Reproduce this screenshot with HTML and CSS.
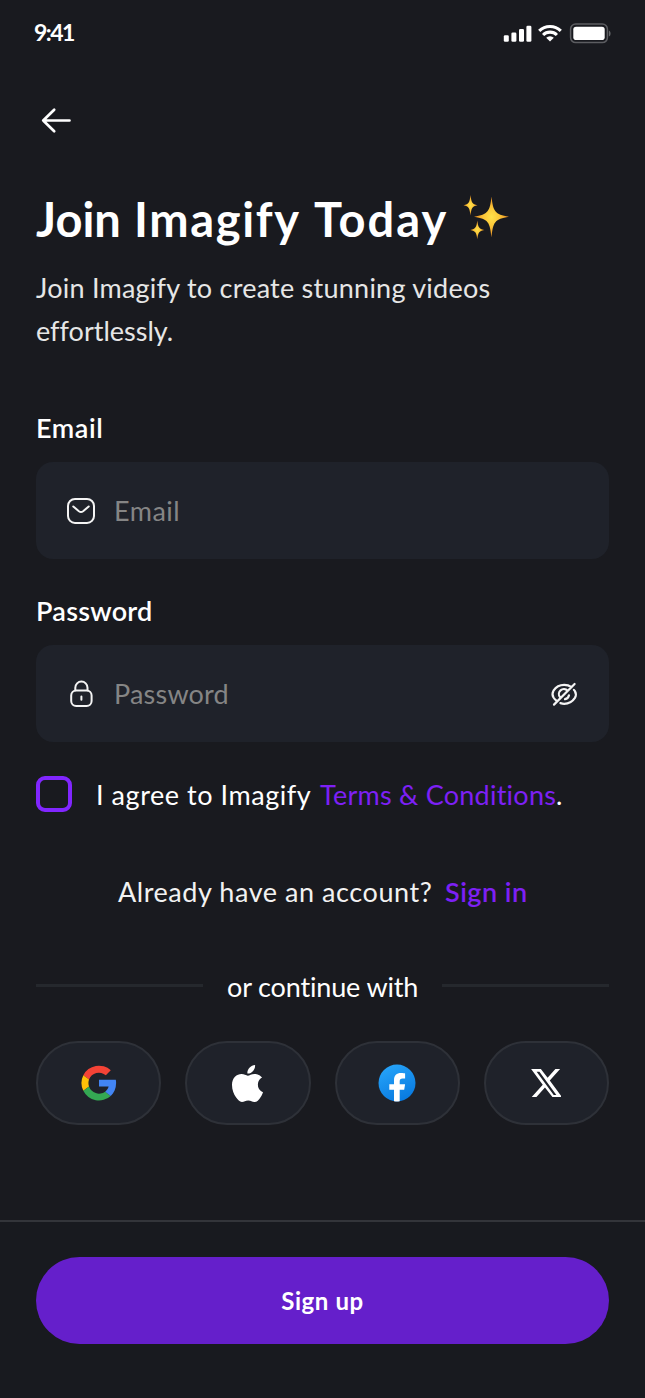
FILE: index.html
```html
<!DOCTYPE html>
<html lang="en">
<head>
<meta charset="utf-8">
<meta name="viewport" content="width=device-width, initial-scale=1">
<title>Join Imagify Today</title>
<link rel="stylesheet" href="styles.css">
</head>
<body>
<div class="screen">
  <header class="status">
    <span class="time">9:41</span>
    <svg class="status-icons" width="108" height="22" viewBox="0 0 108 22" fill="none">
      <g fill="#fff">
        <rect x="0.8" y="13.300" width="5" height="6.500" rx="1.3"/>
        <rect x="8.4" y="10.400" width="5" height="9.400" rx="1.3"/>
        <rect x="16" y="7" width="5" height="12.800" rx="1.3"/>
        <rect x="23.4" y="3.800" width="5" height="16" rx="1.3"/>
      </g>
      <g stroke="#fff" stroke-width="3.1">
        <path d="M36.2 8.9a15.5 15.5 0 0 1 21.600 0"/>
        <path d="M40.1 13a9.8 9.8 0 0 1 13.800 0"/>
      </g>
      <path d="M47 19.600l-3.8-3.9a5.5 5.500 0 0 1 7.600 0z" fill="#fff"/>
      <rect x="67.6" y="2" width="36.800" height="18.600" rx="5" stroke="#5c5d61" stroke-width="1.500"/>
      <rect x="70.3" y="4.700" width="31.400" height="13.300" rx="2.800" fill="#fff"/>
      <path d="M105.9 8.400v6.200c2.200-.9 2.200-5.300 0-6.200z" fill="#66676b"/>
    </svg>
  </header>

  <main class="content">
    <button class="back" aria-label="Back">
      <svg width="32" height="28" viewBox="0 0 32 28" fill="none" stroke="#fff" stroke-width="2.7" stroke-linecap="round" stroke-linejoin="round"><path d="M29.500 14.500H3.200M14.200 3.800L3.200 14.500l11 10.700"/></svg>
    </button>

    <h1 class="title"><span class="title-join">Join </span><span class="title-brand">Imagify </span><span class="title-today">Today</span>
      <svg class="sparkles" width="48" height="48" viewBox="0 0 48 48">
        <defs><radialGradient id="gold"><stop offset="0" stop-color="#ffe14a"/><stop offset=".45" stop-color="#fbc638"/><stop offset="1" stop-color="#e88a20"/></radialGradient></defs>
        <g fill="url(#gold)">
          <path d="M28.5 1.5C30.1 16 31.7 19.5 46 21.700C31.700 23.900 30.100 27 28.500 42.500C26.900 27 25.300 23.900 11 21.700C25.300 19.500 26.900 16 28.500 1.500z"/>
          <path d="M7.500 0C8.400 7.400 9 9.200 14.500 10.300C9 11.400 8.400 13.200 7.500 20.600C6.600 13.200 6 11.400 .5 10.300C6 9.200 6.600 7.400 7.500 0z"/>
          <path d="M14.300 25.500C15.200 32.200 15.800 33.900 21.300 34.900C15.800 35.900 15.200 37.600 14.300 44.300C13.400 37.600 12.800 35.900 7.300 34.900C12.800 33.900 13.400 32.200 14.300 25.500z"/>
        </g>
      </svg>
    </h1>
    <p class="subtitle"><span class="sub-first">Join Imagify to create stunning videos</span> <span class="sub-last">effortlessly.</span></p>

    <form class="form">
      <label class="label label-email" for="email">Email</label>
      <div class="field">
        <svg class="field-icon" width="30" height="30" viewBox="0 0 30 30" fill="none" stroke="#f4f4f4" stroke-width="2" stroke-linecap="round" stroke-linejoin="round"><rect x="2" y="2.900" width="26" height="24" rx="7"/><path d="M7.300 10.500l5.600 4.700q2.100 1.500 4.200 0l5.600-4.700"/></svg>
        <input class="input input-email" id="email" type="email" placeholder="Email">
      </div>

      <label class="label label-password" for="password">Password</label>
      <div class="field">
        <svg class="field-icon" width="30" height="30" viewBox="0 0 30 30" fill="none" stroke="#f4f4f4" stroke-width="2" stroke-linecap="round"><rect x="5.200" y="11.400" width="20.400" height="15.600" rx="5"/><path d="M9.300 11.200V8.700a6.100 6.100 0 0 1 12.200 0v2.500M15.400 17.400v3.400"/></svg>
        <input class="input input-password" id="password" type="password" placeholder="Password">
        <svg class="eye" width="30" height="30" viewBox="0 0 30 30" fill="none" stroke="#f4f4f4" stroke-width="2.200" stroke-linecap="round" stroke-linejoin="round"><path d="M22.600 8.200C20.400 6.700 17.800 5.900 15.200 5.900 10.700 5.900 6.900 8 4.500 11.700c-1.300 2.200-1.300 4.600 0 6.800.8 1.200 1.600 2.100 2.600 2.900M11.400 24.100c1.200.4 2.500.7 3.800.7 4.500 0 8.300-2.200 10.700-5.900 1.300-2.200 1.300-4.600 0-6.800l-1-1.300M18.600 11.700a4.900 4.900 0 0 0-7.400 6.700M20 16.300a4.900 4.900 0 0 1-4 3.900M25.600 5L5 25.600"/></svg>
      </div>

      <label class="agree"><input class="checkbox" type="checkbox"><span class="agree-line"><span class="agree-text">I agree to Imagify</span><a class="terms">Terms &amp; Conditions</a><span>.</span></span></label>
    </form>

    <p class="signin"><span class="signin-text">Already have an account?</span><a class="signin-link">Sign in</a></p>

    <div class="divider"><span class="divider-text">or continue with</span></div>

    <div class="socials">
      <button class="social" aria-label="Google">
        <svg width="36" height="36" viewBox="0 0 48 48"><path fill="#F44336" d="M3.100 13.700A23.200 23.200 0 0 1 39.700 7.100l-6.600 6.600A14 14 0 0 0 10.700 19.400z"/><path fill="#FFC107" d="M3.100 13.700a23.200 23.200 0 0 0 0 20.600l7.600-5.700a14 14 0 0 1 0-9.200z"/><path fill="#34A853" d="M3.100 34.300a23.200 23.200 0 0 0 36.500 7l-7.400-5.800a14 14 0 0 1-21.500-6.900z"/><path fill="#4285F4" d="M24 19.700v9.100h12.800c-.6 2.700-2.200 5.100-4.600 6.700l7.400 5.800c4.300-4 7.200-10 7.200-17.300 0-1.500-.1-3-.4-4.300z"/></svg>
      </button>
      <button class="social" aria-label="Apple">
        <svg width="31" height="37" viewBox="0 0 814 1000" preserveAspectRatio="none"><path fill="#fff" d="M788.100 340.900c-5.800 4.500-108.200 62.200-108.200 190.500 0 148.400 130.300 200.900 134.200 202.200-.6 3.200-20.700 71.900-68.700 141.900-42.800 61.600-87.500 123.100-155.500 123.100s-85.500-39.500-164-39.500c-76.500 0-103.700 40.800-165.900 40.800s-105.600-57-155.500-127C46.700 790.700 0 663 0 541.800c0-194.400 126.400-297.500 250.800-297.500 66.100 0 121.200 43.400 162.700 43.400 39.500 0 101.100-46 176.300-46 28.500 0 130.900 2.600 198.300 99.200zm-234-181.500c31.100-36.900 53.100-88.100 53.100-139.300 0-7.100-.6-14.300-1.900-20.100-50.600 1.900-110.800 33.700-147.100 75.800-28.500 32.400-55.100 83.600-55.100 135.500 0 7.800 1.300 15.600 1.900 18.100 3.200.6 8.400 1.300 13.600 1.300 45.400 0 102.500-30.400 135.500-71.300z"/></svg>
      </button>
      <button class="social" aria-label="Facebook">
        <svg width="38" height="38" viewBox="0 0 38 38"><defs><linearGradient id="fb" x1=".2" y1="0" x2=".65" y2="1"><stop stop-color="#27a5fa"/><stop offset="1" stop-color="#0879df"/></linearGradient></defs><circle cx="19" cy="19" r="18.500" fill="url(#fb)"/><path fill="#fff" d="M16 37.300V25.800h-4.700v-5.500H16v-4.100c0-4.600 2.700-7.100 6.900-7.100 2 0 4.200.3 4.200.3v5.100h-2.400c-2.300 0-3 1.300-3 2.800v3h5.400l-.9 5.500h-4.500v11.500q-2.800.5-5.700 0z"/></svg>
      </button>
      <button class="social" aria-label="X">
        <svg width="30" height="28" viewBox="1.180 1.250 21 20" preserveAspectRatio="none"><path fill="#fff" d="M18.244 1.250h3.308l-7.227 8.260 8.502 11.740H16.170l-5.214-6.817L4.990 21.250H1.680l7.730-8.835L1.254 1.250H8.080l4.713 6.231zm-1.161 18.520h1.833L7.084 3.126H5.117z"/></svg>
      </button>
    </div>
  </main>

  <footer class="footer"><button class="signup">Sign up</button></footer>
</div>
</body>
</html>
```
FILE: styles.css
```css
* { box-sizing: border-box; }
body {
  margin: 0;
  background: #191a1f;
  color: #fff;
  font-family: Lato, "Open Sans", sans-serif;
  font-size: 27px;
  font-variant-ligatures: none;
  line-height: 38px;
}
button { border: 0; padding: 0; background: none; color: inherit; font: inherit; }
h1, p { margin: 0; }
svg { display: block; flex: none; }
.screen { display: flex; flex-direction: column; height: 1398px; overflow: hidden; }

.status {
  display: flex;
  align-items: center;
  justify-content: space-between;
  height: 66px;
  padding: 0 34px;
}
.time { margin-top: -2px; font-size: 23px; font-weight: 700; letter-spacing: -1.5px; }

.content { flex: 1; padding: 40px 36px 0; }
.back { display: block; height: 28px; margin-left: 4px; }

.title {
  display: flex;
  align-items: center;
  height: 62px;
  margin-top: 54px;
  font-size: 47px;
  font-weight: 700;
  line-height: 64px;
  white-space: nowrap;
}
.title-join { width: 98px; }
.title-brand { width: 180px; letter-spacing: 1.65px; }
.title-today { width: 149px; letter-spacing: 2px; }
.sparkles { margin-top: 0; }
.subtitle { margin-top: 16px; line-height: 43px; color: #e6e6e6; }
.sub-first, .sub-last { display: block; white-space: nowrap; }
.sub-first { letter-spacing: 0.24px; }

.label { display: block; height: 36px; line-height: 36px; font-weight: 600; }
.label-email { margin-top: 58px; letter-spacing: 0.6px; }
.label-password { margin-top: 34px; letter-spacing: 0.25px; }
.field {
  display: flex;
  align-items: center;
  height: 97px;
  margin-top: 16px;
  padding: 0 30px;
  border-radius: 17px;
  background: #1f222a;
}
.input {
  flex: 1;
  min-width: 0;
  height: 40px;
  margin-left: 18px;
  padding: 0;
  border: 0;
  outline: 0;
  background: none;
  color: #fff;
  font: inherit;
}
.input-email { letter-spacing: 0.5px; }
.input-password { letter-spacing: 0.2px; }
.input::placeholder { color: #858585; opacity: 1; }

.agree { display: flex; align-items: center; height: 36px; margin-top: 34px; }
.checkbox {
  appearance: none;
  width: 36px;
  height: 36px;
  margin: 0 24px 0 0;
  border: 4px solid #8126ff;
  border-radius: 9px;
}
.agree-line { display: flex; margin-top: 2px; white-space: nowrap; }
.agree-text { width: 224px; letter-spacing: 0.55px; }
.terms { width: 236px; color: #7d20f5; letter-spacing: 0.25px; }

.signin { display: flex; height: 36px; margin-top: 61px; padding-left: 82px; white-space: nowrap; }
.signin-text { width: 327px; color: #f2f2f2; letter-spacing: 0.56px; }
.signin-link { color: #7d20f5; font-weight: 600; letter-spacing: 0.5px; }

.divider { display: flex; align-items: center; gap: 24px; height: 36px; margin-top: 59px; }
.divider::before, .divider::after {
  content: "";
  flex: 1;
  height: 3px;
  margin-bottom: 1px;
  background: #25282d;
}
.divider-text { width: 191px; margin-top: 2px; letter-spacing: -0.15px; white-space: nowrap; }

.socials { display: grid; grid-template-columns: repeat(4, 1fr); gap: 24px; margin-top: 37px; }
.social {
  display: flex;
  align-items: center;
  justify-content: center;
  height: 84px;
  border: 2px solid #2e3138;
  border-radius: 42px;
  background: #1f222a;
}

.footer {
  height: 178px;
  padding: 35px 36px 0;
  border-top: 2px solid #33353a;
  background: #181a1f;
}
.signup {
  display: block;
  width: 100%;
  height: 87px;
  padding-top: 1px;
  border-radius: 44px;
  background: #651fcb;
  font-size: 24px;
  font-weight: 700;
  letter-spacing: 0.6px;
}
```
